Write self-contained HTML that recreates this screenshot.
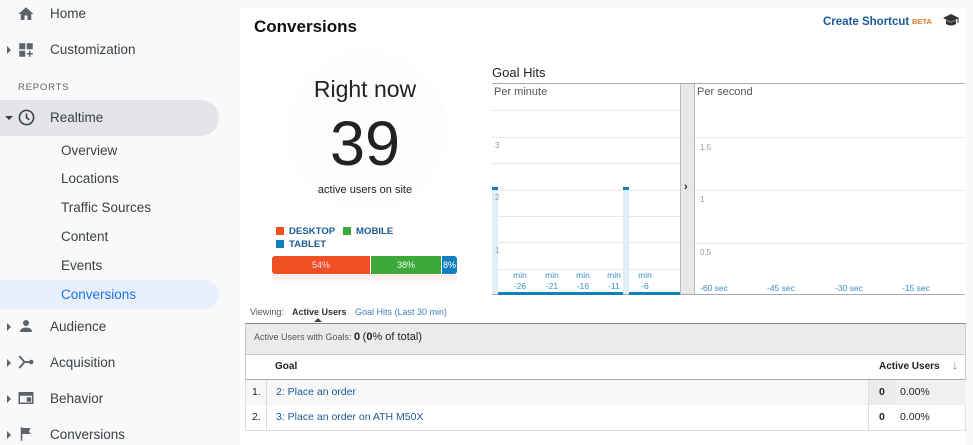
<!DOCTYPE html>
<html><head><meta charset="utf-8"><style>
*{margin:0;padding:0;box-sizing:border-box}
body{width:973px;height:445px;background:#f8f9fa;font-family:"Liberation Sans",Arial,sans-serif;position:relative;overflow:hidden;color:#202124}
.a{position:absolute}
.nav{font-size:13.5px;color:#3c4043;white-space:nowrap}
.sub{font-size:13.5px;color:#3c4043;left:61px}
.ic{position:absolute;left:17px}
.tri{position:absolute;left:7px;width:0;height:0;border-top:4px solid transparent;border-bottom:4px solid transparent;border-left:4px solid #5f6368}
.main{left:240px;top:8px;width:726px;height:437px;background:#fff}
.gl{position:absolute;height:1px;background:#e8e8e8}
.yl{position:absolute;font-size:8px;color:#999}
.xl{position:absolute;font-size:8.5px;color:#3b8fc4;text-align:center;width:30px;line-height:11px}
.sl{position:absolute;font-size:8.5px;color:#3b8fc4}
.lnk{color:#1a5a96}
.lg{position:absolute;font-size:9.6px;font-weight:bold;color:#1a5a96;white-space:nowrap}
</style></head><body>
<!-- sidebar -->
<svg class="ic" style="top:5px" width="18" height="18" viewBox="0 0 24 24"><path d="M10 20v-6h4v6h5v-8h3L12 3 2 12h3v8z" fill="#5f6368"/></svg>
<div class="a nav" style="left:50px;top:6px">Home</div>
<div class="tri" style="top:46px"></div>
<svg class="ic" style="top:41px" width="18" height="18" viewBox="0 0 24 24"><path d="M3 3h8v8H3zM13 3h8v8h-8zM3 13h8v8H3zM16 13h2v3h3v2h-3v3h-2v-3h-3v-2h3z" fill="#5f6368"/></svg>
<div class="a nav" style="left:50px;top:42px">Customization</div>
<div class="a" style="left:18px;top:82px;font-size:9.5px;letter-spacing:.8px;color:#5f6368">REPORTS</div>
<div class="a" style="left:0;top:100px;width:219px;height:36px;background:#e3e5e8;border-radius:0 18px 18px 0"></div>
<div class="a" style="left:5px;top:116px;border-left:4px solid transparent;border-right:4px solid transparent;border-top:4px solid #3c4043"></div>
<svg class="ic" style="top:108px" width="19" height="19" viewBox="0 0 24 24"><circle cx="12" cy="12" r="9" fill="none" stroke="#3c4043" stroke-width="2"/><path d="M12 7v5l3.5 3" fill="none" stroke="#3c4043" stroke-width="2"/></svg>
<div class="a nav" style="left:50px;top:110px">Realtime</div>
<div class="a sub" style="top:143px">Overview</div>
<div class="a sub" style="top:171px">Locations</div>
<div class="a sub" style="top:200px">Traffic Sources</div>
<div class="a sub" style="top:229px">Content</div>
<div class="a sub" style="top:258px">Events</div>
<div class="a" style="left:0;top:280px;width:219px;height:29px;background:#e8f0fe;border-radius:0 15px 15px 0"></div>
<div class="a sub" style="top:287px;color:#1a73e8">Conversions</div>
<div class="tri" style="top:323px"></div>
<svg class="ic" style="top:317px" width="18" height="18" viewBox="0 0 24 24"><circle cx="12" cy="8" r="4" fill="#5f6368"/><path d="M4 20c0-4 4-6 8-6s8 2 8 6z" fill="#5f6368"/></svg>
<div class="a nav" style="left:50px;top:319px">Audience</div>
<div class="tri" style="top:359px"></div>
<svg class="ic" style="top:353px" width="18" height="18" viewBox="0 0 24 24"><path d="M3 4l7 8-7 8M10 12h8" fill="none" stroke="#5f6368" stroke-width="2.5"/><circle cx="19" cy="12" r="3" fill="#5f6368"/></svg>
<div class="a nav" style="left:50px;top:355px">Acquisition</div>
<div class="tri" style="top:395px"></div>
<svg class="ic" style="top:389px" width="18" height="18" viewBox="0 0 24 24"><rect x="3" y="5" width="18" height="14" fill="none" stroke="#5f6368" stroke-width="2"/><rect x="3" y="5" width="18" height="4" fill="#5f6368"/><rect x="13" y="11" width="6" height="6" fill="#5f6368"/></svg>
<div class="a nav" style="left:50px;top:391px">Behavior</div>
<div class="tri" style="top:431px"></div>
<svg class="ic" style="top:425px" width="18" height="18" viewBox="0 0 24 24"><path d="M5 3h2v18H5zM7 4h11l-2 4 2 4H7z" fill="#5f6368"/></svg>
<div class="a nav" style="left:50px;top:427px">Conversions</div>

<div class="a main"></div>
<div class="a" style="left:254px;top:17px;font-size:17px;font-weight:bold;color:#111">Conversions</div>
<div class="a" style="left:823px;top:16px;font-size:11.5px;font-weight:bold;color:#1a5a96">Create Shortcut</div>
<div class="a" style="left:912px;top:17px;font-size:7.5px;font-weight:bold;color:#e57a2e">BETA</div>
<svg class="a" style="left:942px;top:13px" width="18" height="14" viewBox="0 0 18 14"><path d="M1 5l8-4 8 4-8 4z" fill="#333"/><path d="M4 7v4c3 2 7 2 10 0V7l-5 2.5z" fill="#333"/><path d="M16 5v5" stroke="#333"/></svg>

<!-- right now -->
<div class="a" style="left:287px;top:50px;width:160px;height:160px;border-radius:50%;background:#fbfefb"></div>
<div class="a" style="left:240px;top:76px;width:250px;text-align:center;font-size:23px;color:#222">Right now</div>
<div class="a" style="left:240px;top:106px;width:250px;text-align:center;font-size:63px;color:#222;line-height:76px">39</div>
<div class="a" style="left:240px;top:184px;width:250px;text-align:center;font-size:11px;color:#222">active users on site</div>
<div class="a" style="left:276px;top:227px;width:8px;height:8px;background:#f04e23"></div>
<div class="lg" style="left:289px;top:226px">DESKTOP</div>
<div class="a" style="left:343px;top:227px;width:8px;height:8px;background:#3ea83a"></div>
<div class="lg" style="left:356px;top:226px">MOBILE</div>
<div class="a" style="left:276px;top:240px;width:8px;height:8px;background:#0f7fc1"></div>
<div class="lg" style="left:289px;top:239px">TABLET</div>
<div class="a" style="left:272px;top:256px;width:98px;height:18px;background:#f04e23;border-radius:3px 0 0 3px;color:#fde;font-size:9px;text-align:center;line-height:18px">54%</div>
<div class="a" style="left:371px;top:256px;width:70px;height:18px;background:#3ea83a;color:#efe;font-size:9px;text-align:center;line-height:18px">38%</div>
<div class="a" style="left:442px;top:256px;width:15px;height:18px;background:#0f7fc1;border-radius:0 3px 3px 0;color:#fff;font-size:9px;line-height:18px;text-align:center">8%</div>
<div class="a" style="left:272px;top:275px;width:185px;height:8px;background:linear-gradient(#fde8e2,#fff)"></div>

<!-- chart -->
<div class="a" style="left:492px;top:65px;font-size:13px;color:#222">Goal Hits</div>
<div class="a" style="left:492px;top:83px;width:473px;height:1px;background:#aaa"></div>
<div class="a" style="left:492px;top:294px;width:473px;height:1px;background:#aaa"></div>
<div class="a" style="left:680px;top:84px;width:15px;height:210px;background:#e8e8e8;border-left:1px solid #bbb;border-right:1px solid #bbb"></div>
<div class="a" style="left:684px;top:181px;font-size:11px;font-weight:bold;color:#222">›</div>
<div class="a" style="left:494px;top:86px;font-size:11px;color:#555">Per minute</div>
<div class="a" style="left:697px;top:86px;font-size:11px;color:#555">Per second</div>
<div class="gl" style="left:492px;top:110px;width:188px"></div>
<div class="gl" style="left:492px;top:137px;width:188px"></div>
<div class="gl" style="left:492px;top:163px;width:188px"></div>
<div class="gl" style="left:492px;top:190px;width:188px"></div>
<div class="gl" style="left:492px;top:216px;width:188px"></div>
<div class="gl" style="left:492px;top:242px;width:188px"></div>
<div class="gl" style="left:492px;top:269px;width:188px"></div>
<div class="gl" style="left:695px;top:137px;width:270px"></div>
<div class="gl" style="left:695px;top:190px;width:270px"></div>
<div class="gl" style="left:695px;top:243px;width:270px"></div>
<div class="a" style="left:492px;top:187px;width:6px;height:107px;background:#dfeef7"></div>
<div class="a" style="left:492px;top:187px;width:6px;height:3px;background:#0f7fc1"></div>
<div class="a" style="left:623px;top:187px;width:6px;height:107px;background:#dfeef7"></div>
<div class="a" style="left:623px;top:187px;width:6px;height:3px;background:#0f7fc1"></div>
<div class="a" style="left:498px;top:292px;width:125px;height:3px;background:#0f7fc1"></div>
<div class="a" style="left:629px;top:292px;width:51px;height:3px;background:#0f7fc1"></div>
<div class="yl" style="left:495px;top:141px">3</div>
<div class="yl" style="left:495px;top:193px">2</div>
<div class="yl" style="left:495px;top:246px">1</div>
<div class="yl" style="left:700px;top:143px">1.5</div>
<div class="yl" style="left:700px;top:195px">1</div>
<div class="yl" style="left:700px;top:248px">0.5</div>
<div class="xl" style="left:505px;top:270px">min<br>-26</div>
<div class="xl" style="left:537px;top:270px">min<br>-21</div>
<div class="xl" style="left:568px;top:270px">min<br>-16</div>
<div class="xl" style="left:599px;top:270px">min<br>-11</div>
<div class="xl" style="left:630px;top:270px">min<br>-6</div>
<div class="sl" style="left:700px;top:283px">-60 sec</div>
<div class="sl" style="left:767px;top:283px">-45 sec</div>
<div class="sl" style="left:835px;top:283px">-30 sec</div>
<div class="sl" style="left:902px;top:283px">-15 sec</div>

<!-- viewing -->
<div class="a" style="left:250px;top:307px;font-size:9px;color:#555">Viewing:</div>
<div class="a" style="left:292px;top:307px;font-size:9px;font-weight:bold;color:#333">Active Users</div>
<div class="a" style="left:355px;top:307px;font-size:9px;color:#3b7fb8">Goal Hits (Last 30 min)</div>
<div class="a" style="left:314px;top:318px;border-left:4px solid transparent;border-right:4px solid transparent;border-bottom:4px solid #444"></div>

<!-- table -->
<div class="a" style="left:245px;top:323px;width:721px;height:32px;background:#ebebeb;border:1px solid #ccc;border-top:1px solid #888"></div>
<div class="a" style="left:254px;top:331px;font-size:9px;color:#555">Active Users with Goals: <b style="font-size:11px;color:#222">0</b> <span style="font-size:11px;color:#222">(<b>0</b>% of total)</span></div>
<div class="a" style="left:245px;top:355px;width:721px;height:25px;background:#fff;border-left:1px solid #ccc;border-right:1px solid #ccc;border-bottom:1px solid #aaa"></div>
<div class="a" style="left:275px;top:361px;font-size:10px;font-weight:bold;color:#222">Goal</div>
<div class="a" style="left:879px;top:361px;font-size:10px;font-weight:bold;color:#222">Active Users</div>
<div class="a" style="left:952px;top:358px;font-size:12px;color:#777">↓</div>
<div class="a" style="left:245px;top:380px;width:721px;height:26px;background:#f7f7f7;border:1px solid #ddd;border-top:none"></div>
<div class="a" style="left:245px;top:405px;width:721px;height:26px;background:#fff;border:1px solid #ddd;border-top:none"></div>
<div class="a" style="left:266px;top:380px;width:1px;height:51px;background:#ddd"></div>
<div class="a" style="left:868px;top:380px;width:1px;height:51px;background:#ddd"></div>
<div class="a" style="left:869px;top:380px;width:27px;height:25px;background:#ebebeb"></div>
<div class="a" style="left:896px;top:380px;width:70px;height:25px;background:#f0f0f0"></div>
<div class="a" style="left:252px;top:386px;font-size:10.5px;color:#222">1.</div>
<div class="a lnk" style="left:276px;top:386px;font-size:10.5px">2: Place an order</div>
<div class="a" style="left:879px;top:386px;font-size:10.5px;font-weight:bold">0</div>
<div class="a" style="left:900px;top:386px;font-size:10.5px;color:#222">0.00%</div>
<div class="a" style="left:252px;top:411px;font-size:10.5px;color:#222">2.</div>
<div class="a lnk" style="left:276px;top:411px;font-size:10.5px">3: Place an order on ATH M50X</div>
<div class="a" style="left:879px;top:411px;font-size:10.5px;font-weight:bold">0</div>
<div class="a" style="left:900px;top:411px;font-size:10.5px;color:#222">0.00%</div>
</body></html>
